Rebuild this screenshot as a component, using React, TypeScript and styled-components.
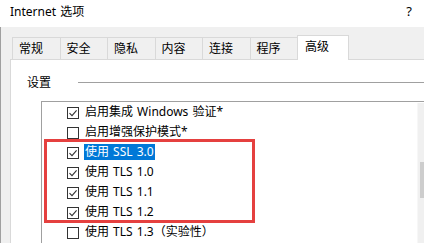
import React from "react";
import styled, { createGlobalStyle } from "styled-components";

const GlobalStyle = createGlobalStyle`
  html, body { margin: 0; padding: 0; background: #ffffff; }
  body {
    font-family: "Noto Sans", "Noto Sans CJK SC", sans-serif;
    font-size: 12px;
    color: #000000;
    word-spacing: 1px;
  }
  * { box-sizing: border-box; }
`;

const Window = styled.div`
  position: relative;
  width: 424px;
  height: 243px;
  overflow: hidden;
  background: #ffffff;
  display: flex;
  flex-direction: column;
`;

const TitleBar = styled.div`
  height: 27px;
  flex: none;
  display: flex;
  align-items: center;
  justify-content: space-between;
  padding: 0 12px 3px 10px;
  font-size: 12px;
  line-height: 16px;
  background: #ffffff;
`;

const HelpMark = styled.span`
  font-size: 13px;
  margin-bottom: 2px;
`;

const Body = styled.div`
  flex: 1;
  background: #f0f0f0;
  border-left: 1px solid #a0a0a0;
  padding: 8px 0 0 9px;
  display: flex;
  flex-direction: column;
  min-width: 0;
`;

const TabRow = styled.div`
  display: flex;
  align-items: flex-end;
  height: 24px;
  padding-left: 2px;
  flex: none;
`;

const Tab = styled.div<{ $active?: boolean }>`
  position: relative;
  flex: none;
  width: ${(p) => (p.$active ? "52px" : "47.5px")};
  height: ${(p) => (p.$active ? "25px" : "22px")};
  margin-bottom: ${(p) => (p.$active ? "-1px" : "0")};
  z-index: ${(p) => (p.$active ? 2 : 1)};
  background: ${(p) => (p.$active ? "#ffffff" : "#f0f0f0")};
  border: 1px solid #d9d9d9;
  border-bottom: none;
  border-right: ${(p) => (p.$active ? "1px solid #d9d9d9" : "none")};
  padding: ${(p) => (p.$active ? "3px 0 0 7px" : "3px 0 0 6px")};
  font-size: 12px;
  line-height: 16px;
  white-space: nowrap;
`;

const Panel = styled.div`
  flex: 1;
  width: 440px;
  background: #ffffff;
  border: 1px solid #d9d9d9;
  display: flex;
  flex-direction: column;
  padding-left: 16px;
`;

const GroupHeader = styled.div`
  display: flex;
  align-items: center;
  margin-top: 15px;
  height: 16px;
`;

const GroupLabel = styled.span`
  font-size: 12px;
  line-height: 16px;
`;

const GroupLine = styled.div`
  flex: 1;
  height: 1px;
  background: #a0a0a0;
  margin-left: 27px;
  margin-top: -1px;
`;

const ListBox = styled.div`
  margin-top: 10px;
  margin-left: 14px;
  width: 394px;
  flex: 1;
  border: 1px solid #a0a0a0;
  border-bottom: none;
  display: flex;
  background: #ffffff;
`;

const Items = styled.div`
  flex: 1;
  padding-top: 1px;
  display: flex;
  flex-direction: column;
`;

const Row = styled.div`
  height: 20px;
  flex: none;
  display: flex;
  align-items: center;
  padding-left: 25px;
`;

const Box = styled.span`
  width: 12px;
  height: 12px;
  flex: none;
  border: 1px solid #333333;
  background: #ffffff;
  display: flex;
  align-items: center;
  justify-content: center;
`;

const Label = styled.span<{ $selected?: boolean }>`
  margin-left: 5px;
  padding: 0 1px;
  height: 16px;
  line-height: 16px;
  font-size: 12px;
  white-space: nowrap;
  background: ${(p) => (p.$selected ? "#0078d7" : "transparent")};
  color: ${(p) => (p.$selected ? "#ffffff" : "#000000")};
  margin-top: -2px;
`;

const ScrollBar = styled.div`
  width: 17px;
  flex: none;
  margin-top: 1px;
  background: #f0f0f0;
  border-left: 1px solid #f7f7f7;
  padding-left: 2px;
`;

const Thumb = styled.div`
  width: 9px;
  height: 36px;
  margin-top: 59px;
  background: #cdcdcd;
`;

const Highlight = styled.div`
  position: absolute;
  left: 44px;
  top: 139px;
  width: 211px;
  height: 84px;
  border: 3px solid #e5403f;
  pointer-events: none;
  z-index: 5;
`;

const Check = () => (
  <svg width="10" height="10" viewBox="0 0 10 10">
    <path d="M1.5 5.2 L4 7.6 L8.6 2.4" fill="none" stroke="#333333" strokeWidth="1.1" />
  </svg>
);

type Item = { text: string; checked: boolean; selected?: boolean };

const items: Item[] = [
  { text: "启用集成 Windows 验证*", checked: true },
  { text: "启用增强保护模式*", checked: false },
  { text: "使用 SSL 3.0", checked: true, selected: true },
  { text: "使用 TLS 1.0", checked: true },
  { text: "使用 TLS 1.1", checked: true },
  { text: "使用 TLS 1.2", checked: true },
  { text: "使用 TLS 1.3（实验性）", checked: false },
];

const tabs = ["常规", "安全", "隐私", "内容", "连接", "程序", "高级"];

export default function App() {
  return (
    <>
      <GlobalStyle />
      <Window>
        <TitleBar>
          <span>Internet 选项</span>
          <HelpMark>?</HelpMark>
        </TitleBar>
        <Body>
          <TabRow>
            {tabs.map((t) => (
              <Tab key={t} $active={t === "高级"}>
                {t}
              </Tab>
            ))}
          </TabRow>
          <Panel>
            <GroupHeader>
              <GroupLabel>设置</GroupLabel>
              <GroupLine />
            </GroupHeader>
            <ListBox>
              <Items>
                {items.map((it) => (
                  <Row key={it.text}>
                    <Box>{it.checked && <Check />}</Box>
                    <Label $selected={it.selected}>{it.text}</Label>
                  </Row>
                ))}
              </Items>
              <ScrollBar>
                <Thumb />
              </ScrollBar>
            </ListBox>
          </Panel>
        </Body>
        <Highlight />
      </Window>
    </>
  );
}
